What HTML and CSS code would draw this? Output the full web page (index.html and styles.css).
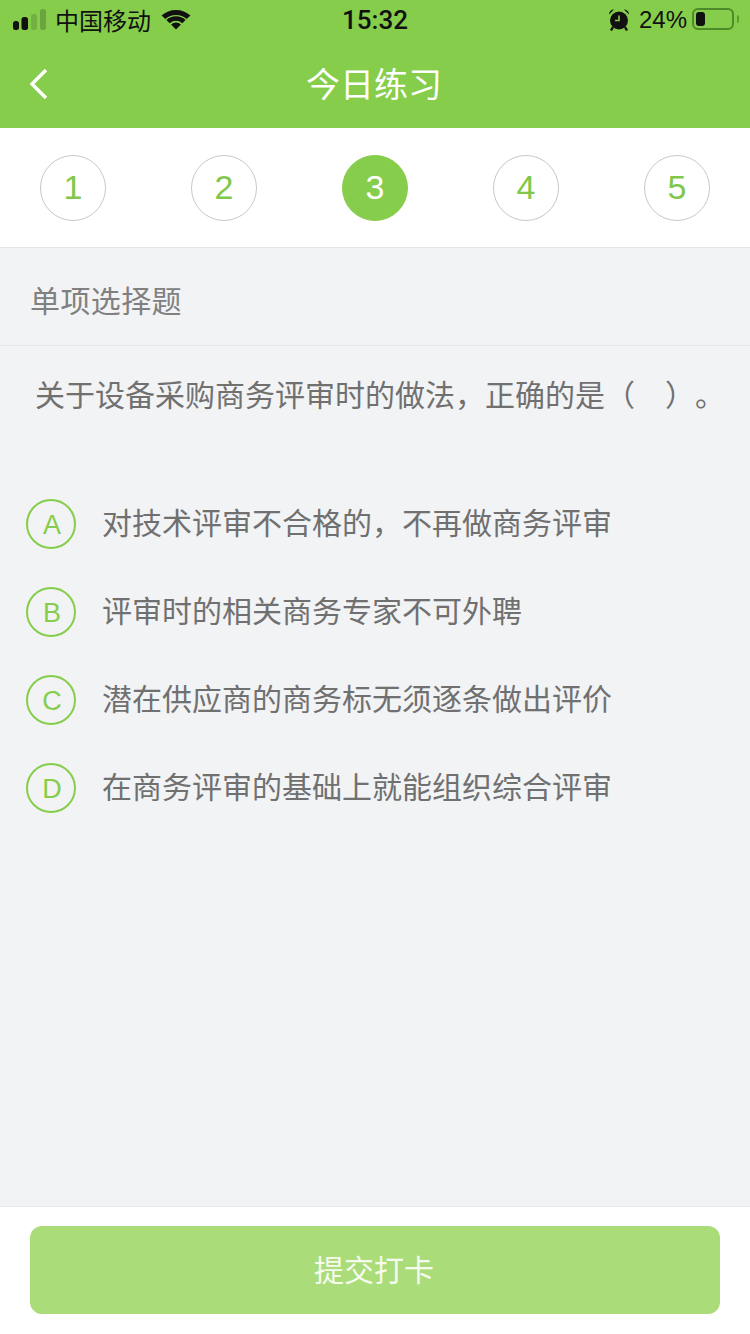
FILE: index.html
```html
<!DOCTYPE html>
<html lang="zh-CN">
<head>
    <meta charset="UTF-8">
    <meta name="viewport" content="width=device-width, initial-scale=1.0">
    <title>今日练习</title>
    <link rel="stylesheet" href="styles.css">
</head>
<body>
    <div class="header">
        <div class="statusbar">
            <div class="status-left">
                <svg class="signal" width="34" height="24" viewBox="0 0 34 24">
                    <rect x="0" y="13" width="6" height="9" rx="2.5" fill="#111"/>
                    <rect x="8.5" y="9" width="6.5" height="13" rx="2.5" fill="#111"/>
                    <rect x="18" y="6" width="6" height="16" rx="2.5" fill="#72b045"/>
                    <rect x="27" y="1" width="6" height="21" rx="2.5" fill="#6ca442"/>
                </svg>
                <span class="carrier">中国移动</span>
                <svg class="wifi" width="30" height="22" viewBox="1 0 28 22" preserveAspectRatio="none">
                    <path d="M3.3 8.3 A16.5 16.5 0 0 1 26.7 8.3" fill="none" stroke="#111" stroke-width="5"/>
                    <path d="M7.6 12.6 A10.5 10.5 0 0 1 22.4 12.6" fill="none" stroke="#111" stroke-width="4.5"/>
                    <path d="M10.4 15.4 A6.5 6.5 0 0 1 19.6 15.4 L15 20.5 Z" fill="#111"/>
                </svg>
            </div>
            <span class="time">15:32</span>
            <div class="status-right">
                <svg class="alarm" width="22" height="24" viewBox="0 0 22 24">
                    <circle cx="11" cy="12.5" r="9" fill="#111"/>
                    <path d="M11 7.5 V12.5 H7" fill="none" stroke="#86cd4b" stroke-width="1.6"/>
                    <path d="M1 6.5 A5 5 0 0 1 6 1.5 Z M21 6.5 A5 5 0 0 0 16 1.5 Z" fill="#111"/>
                    <path d="M5 19 L3 22.5 M17 19 L19 22.5" stroke="#111" stroke-width="2.4"/>
                </svg>
                <span class="percent">24%</span>
                <div class="battery"><div class="battery-fill"></div></div>
                <div class="battery-tip"></div>
            </div>
        </div>
        <div class="nav">
            <svg class="back" width="20" height="32" viewBox="0 0 20 32">
                <path d="M17 2 L3 16 L17 30" fill="none" stroke="#fff" stroke-width="3.4"/>
            </svg>
            <span class="nav-title">今日练习</span>
        </div>
    </div>

    <div class="steps">
        <div class="step">1</div>
        <div class="step">2</div>
        <div class="step active">3</div>
        <div class="step">4</div>
        <div class="step">5</div>
    </div>

    <div class="type-row">单项选择题</div>
    <p class="question">关于设备采购商务评审时的做法，正确的是（<span class="blank"></span>）<span class="period">。</span></p>

    <div class="options">
        <div class="option"><div class="letter">A</div><span class="option-text">对技术评审不合格的，不再做商务评审</span></div>
        <div class="option"><div class="letter">B</div><span class="option-text">评审时的相关商务专家不可外聘</span></div>
        <div class="option"><div class="letter">C</div><span class="option-text">潜在供应商的商务标无须逐条做出评价</span></div>
        <div class="option"><div class="letter">D</div><span class="option-text">在商务评审的基础上就能组织综合评审</span></div>
    </div>

    <div class="footer">
        <button class="submit">提交打卡</button>
    </div>
</body>
</html>
```

FILE: styles.css
```css
body {
    font-family: "Liberation Sans", "Noto Sans CJK SC", sans-serif;
    margin: 0;
    padding: 0;
    width: 750px;
    height: 1334px;
    overflow: hidden;
    display: flex;
    flex-direction: column;
    background-color: #f2f3f5;
    color: #666;
}

.header {
    background-color: #86cd4b;
    height: 128px;
}

.statusbar {
    height: 40px;
    padding: 0 11px 0 13px;
    display: flex;
    justify-content: space-between;
    align-items: center;
    color: #111;
    position: relative;
}

.status-left,
.status-right {
    display: flex;
    align-items: center;
}

.carrier {
    font-size: 24px;
    margin-left: 8px;
    padding-bottom: 2px;
}

.wifi {
    margin-left: 10px;
}

.time {
    font-family: Roboto, "Liberation Sans", sans-serif;
    font-size: 26px;
    font-weight: 500;
    position: absolute;
    left: 0;
    right: 0;
    text-align: center;
}

.percent {
    font-size: 24px;
    margin-left: 9px;
}

.battery {
    width: 42px;
    height: 22px;
    margin-left: 5px;
    margin-bottom: 2px;
    padding: 2px;
    box-sizing: border-box;
    border: 2px solid #4f8a2a;
    border-radius: 6px;
}

.battery-fill {
    width: 9px;
    height: 100%;
    background-color: #111;
    border-radius: 3px;
}

.battery-tip {
    width: 2px;
    height: 8px;
    margin-left: 3px;
    margin-bottom: 2px;
    background-color: #5d9a33;
    border-radius: 0 2px 2px 0;
}

.nav {
    height: 88px;
    display: flex;
    align-items: center;
    justify-content: center;
    position: relative;
}

.back {
    position: absolute;
    left: 29px;
    top: 28px;
}

.nav-title {
    color: #fff;
    font-size: 34px;
    margin-bottom: 4px;
    margin-right: 2px;
}

.steps {
    height: 120px;
    box-sizing: border-box;
    padding: 0 40px;
    display: flex;
    justify-content: space-between;
    align-items: center;
    background-color: #fff;
    border-bottom: 1px solid #e6e6e6;
    flex-shrink: 0;
}

.step {
    width: 66px;
    height: 66px;
    box-sizing: border-box;
    border: 1px solid #c8c8c8;
    border-radius: 50%;
    display: flex;
    align-items: center;
    justify-content: center;
    font-size: 34px;
    color: #7fc84a;
}

.step.active {
    background-color: #86cd4b;
    border-color: #86cd4b;
    color: #fff;
}

.type-row {
    height: 98px;
    box-sizing: border-box;
    padding: 5px 30px 0;
    display: flex;
    align-items: center;
    font-size: 30px;
    letter-spacing: 0.4px;
    color: #808080;
    border-bottom: 1px solid #e6e7ea;
}

.question {
    margin: 0;
    padding: 30px 0 0 35px;
    font-size: 30px;
    line-height: 40px;
    color: #707070;
    white-space: nowrap;
}

.blank {
    display: inline-block;
    width: 30px;
}

.period {
    display: inline-block;
}

.options {
    margin-top: 64px;
    padding-left: 26px;
}

.option {
    height: 88px;
    display: flex;
    align-items: center;
}

.option-text {
    font-size: 30px;
    color: #707070;
    padding-bottom: 6px;
}

.letter {
    width: 50px;
    height: 50px;
    box-sizing: border-box;
    border: 2px solid #86cd4b;
    border-radius: 50%;
    margin-right: 26px;
    padding: 2px 0 0 2px;
    display: flex;
    align-items: center;
    justify-content: center;
    font-size: 27px;
    color: #86cd4b;
}

.footer {
    margin-top: auto;
    height: 128px;
    box-sizing: border-box;
    padding: 19px 30px 0;
    background-color: #fff;
    border-top: 1px solid #e8e9ec;
}

.submit {
    display: block;
    width: 100%;
    height: 88px;
    padding: 0 2px 4px 0;
    border: none;
    border-radius: 12px;
    background-color: #aadc79;
    color: #f5fbee;
    font-family: inherit;
    font-size: 30px;
}
```
